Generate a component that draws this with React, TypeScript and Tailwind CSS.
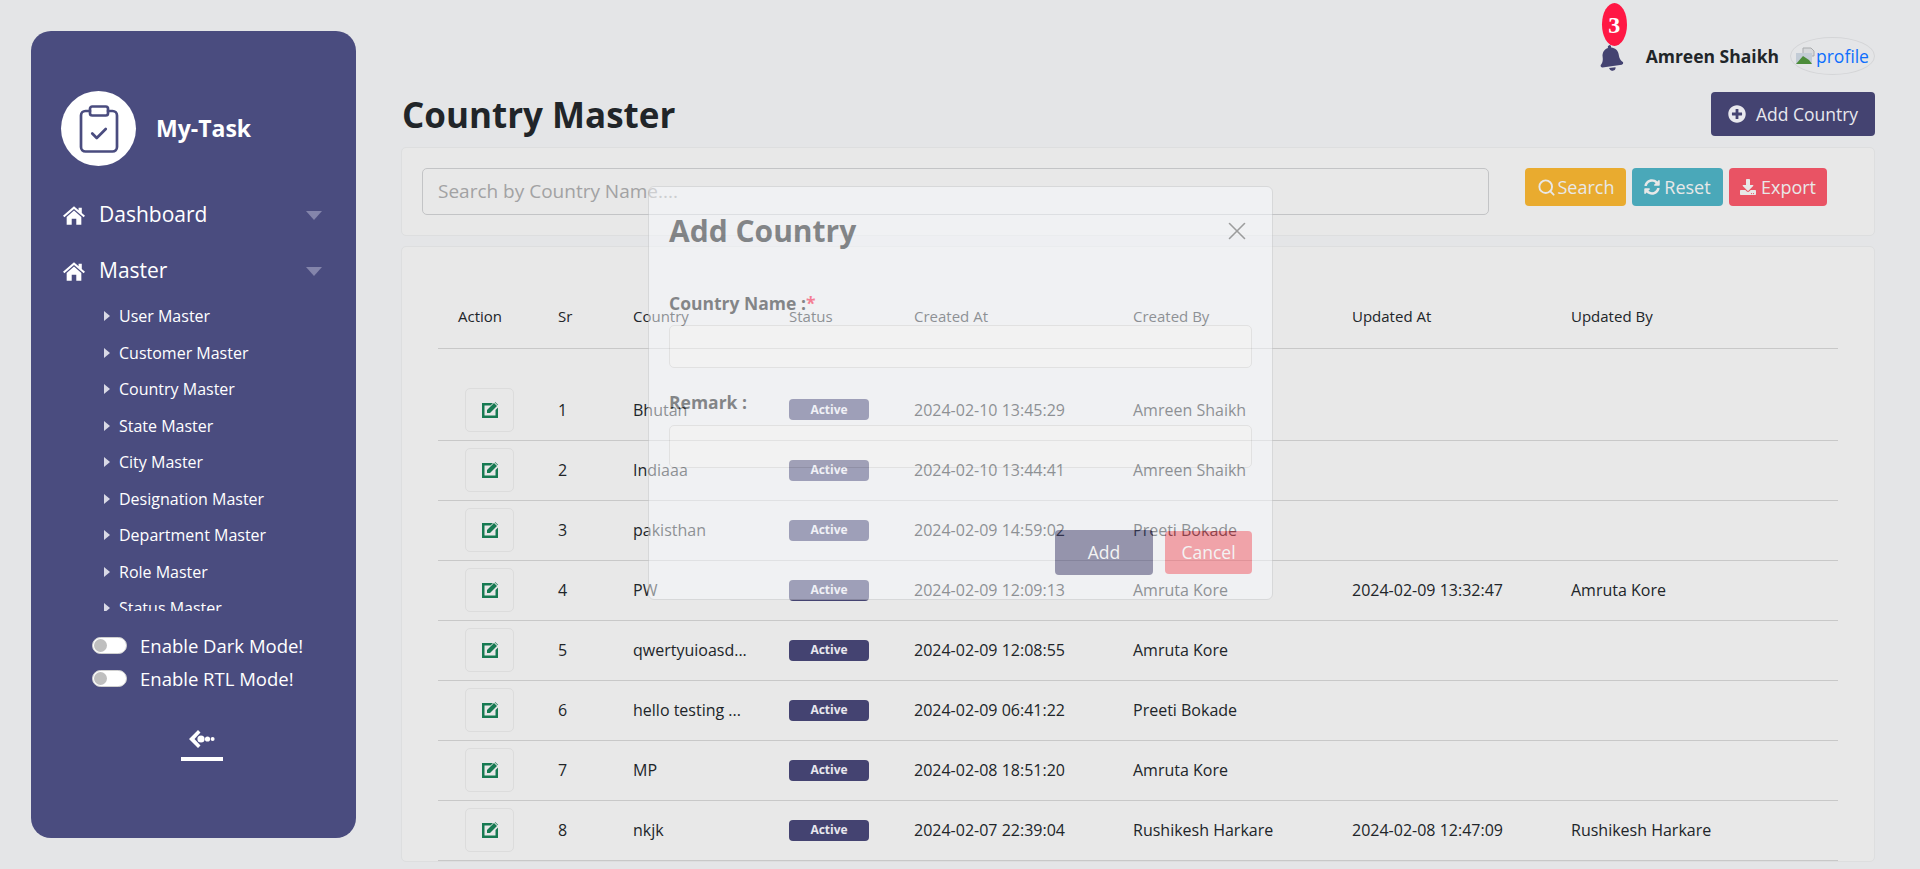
import React from "react";
import { FaBell, FaPlusCircle, FaSyncAlt, FaDownload } from "react-icons/fa";
import { FiSearch, FiX } from "react-icons/fi";
import { LuClipboardCheck } from "react-icons/lu";

const subItems = [
  "User Master",
  "Customer Master",
  "Country Master",
  "State Master",
  "City Master",
  "Designation Master",
  "Department Master",
  "Role Master",
  "Status Master",
];

const rows = [
  { sr: 1, country: "Bhutan", createdAt: "2024-02-10 13:45:29", createdBy: "Amreen Shaikh", updatedAt: "", updatedBy: "" },
  { sr: 2, country: "Indiaaa", createdAt: "2024-02-10 13:44:41", createdBy: "Amreen Shaikh", updatedAt: "", updatedBy: "" },
  { sr: 3, country: "pakisthan", createdAt: "2024-02-09 14:59:02", createdBy: "Preeti Bokade", updatedAt: "", updatedBy: "" },
  { sr: 4, country: "PW", createdAt: "2024-02-09 12:09:13", createdBy: "Amruta Kore", updatedAt: "2024-02-09 13:32:47", updatedBy: "Amruta Kore" },
  { sr: 5, country: "qwertyuioasd...", createdAt: "2024-02-09 12:08:55", createdBy: "Amruta Kore", updatedAt: "", updatedBy: "" },
  { sr: 6, country: "hello testing ...", createdAt: "2024-02-09 06:41:22", createdBy: "Preeti Bokade", updatedAt: "", updatedBy: "" },
  { sr: 7, country: "MP", createdAt: "2024-02-08 18:51:20", createdBy: "Amruta Kore", updatedAt: "", updatedBy: "" },
  { sr: 8, country: "nkjk", createdAt: "2024-02-07 22:39:04", createdBy: "Rushikesh Harkare", updatedAt: "2024-02-08 12:47:09", updatedBy: "Rushikesh Harkare" },
];

const headers = ["Action", "Sr", "Country", "Status", "Created At", "Created By", "Updated At", "Updated By"];

const HomeIcon = () => (
  <svg width="22" height="19" viewBox="0 0 24 20" fill="#fff">
    <path d="M12 0 17 4.2V1.5h3.5V7.2L24 10.2l-1.5 1.7L12 3 1.5 11.9 0 10.2z" />
    <path d="M4 11.5 12 4.6 20 11.5V20H14.5V13.5H9.5V20H4z" />
  </svg>
);

const EditIcon = () => (
  <svg width="16" height="16" viewBox="0 0 16 16" fill="#177a52">
    <path d="M0 1h11L8.5 3.5H2.5v10h11V8L16 5.5V16H0z" />
    <path d="M5 8 12 1 15 4 8 11H5z" />
    <path d="M12.8.4 13.2 0 16 2.8 15.6 3.3z" />
  </svg>
);

const CollapseIcon = () => (
  <svg width="26" height="18" viewBox="0 0 26 18" fill="#fff">
    <path d="M9 0 11.5 2.5 5.5 9 11.5 15.5 9 18 0 9z" />
    <circle cx="12" cy="9" r="3.6" />
    <circle cx="18.5" cy="9" r="2.6" />
    <circle cx="23.6" cy="9" r="2" />
  </svg>
);

const Toggle = ({ label }: { label: string }) => (
  <div className="flex h-[33px] items-center pl-[61px]">
    <div className="flex h-[17px] w-[35px] items-center rounded-full border border-[#cfcfcf] bg-white pl-[1px]">
      <div className="h-[13px] w-[13px] rounded-full bg-[#bfbfbf]" />
    </div>
    <span className="ml-[13px] text-[18.5px] text-white">{label}</span>
  </div>
);

const MainNavItem = ({ label }: { label: string }) => (
  <div className="flex h-[56px] items-center pl-[32px] pr-[34px] text-white">
    <HomeIcon />
    <span className="ml-[14px] flex-1 text-[21px]">{label}</span>
    <svg width="16" height="9" viewBox="0 0 16 9">
      <path d="M0 0h16L8 9z" fill="#8485ab" />
    </svg>
  </div>
);

const App: React.FC = () => {
  return (
    <div className="relative flex h-[869px] overflow-hidden bg-[#e4e5e7] font-['Open_Sans',sans-serif] text-[#212529]">
      {/* Sidebar */}
      <aside className="mt-[31px] ml-[31px] h-[807px] w-[325px] shrink-0 rounded-[20px] bg-[#4a4c7f] pt-[60px]">
        <div className="flex items-center pl-[30px]">
          <div className="flex h-[75px] w-[75px] items-center justify-center rounded-full bg-white">
            <LuClipboardCheck size={54} color="#4a4c7f" strokeWidth={1.2} />
          </div>
          <span className="ml-[20px] text-[23px] font-bold text-white">My-Task</span>
        </div>

        <nav className="mt-[21px] h-[424px] overflow-hidden">
          <MainNavItem label="Dashboard" />
          <MainNavItem label="Master" />
          <ul className="-mt-[1px]">
            {subItems.map((item) => (
              <li key={item} className="flex h-[36.5px] items-center pl-[73px] text-[16px] text-white">
                <svg width="6" height="10" viewBox="0 0 6 10" className="mr-[9px]">
                  <path d="M0 0l6 5-6 5z" fill="#d9d9e6" />
                </svg>
                <span>{item}</span>
              </li>
            ))}
          </ul>
        </nav>

        <div className="mt-[18px]">
          <Toggle label="Enable Dark Mode!" />
          <Toggle label="Enable RTL Mode!" />
        </div>

        <div className="mt-[35px] flex flex-col items-center pl-[17px]">
          <CollapseIcon />
          <div className="mt-[9px] h-[4px] w-[42px] bg-white" />
        </div>
      </aside>

      {/* Main */}
      <main className="ml-[45px] mr-[45px] min-w-0 flex-1">
        <div className="flex h-[92px] items-start justify-end pt-[37px]">
          <div className="relative mt-[8px] mr-[22px]">
            <FaBell className="-rotate-[8deg] text-[26px] text-[#444371]" />
            <span className="absolute -top-[42px] left-[4px] flex h-[43px] w-[25px] items-center justify-center rounded-[50%] bg-[#ff1744] font-['Liberation_Serif',serif] text-[24px] font-bold text-white">
              3
            </span>
          </div>
          <span className="mt-[6px] text-[17.5px] font-bold">Amreen Shaikh</span>
          <div className="ml-[11px] flex h-[38px] w-[85px] items-center overflow-hidden rounded-[50%] border border-[#d4d5d7] pl-[5px]">
            <svg width="20" height="18" viewBox="0 0 20 18" className="shrink-0">
              <path d="M7 1h8l3 3v5H7z" fill="#d7d9dc" stroke="#a9abad" strokeWidth="1" />
              <path d="M0 6h16v11H0z" fill="#c3ccd6" />
              <path d="M0 17l7-8 6 4 3 4z" fill="#4c8c3a" />
            </svg>
            <span className="text-[17.5px] text-[#0d6efd]">profile</span>
          </div>
        </div>

        <div className="flex h-[55px] items-start justify-between pl-[1px]">
          <h1 className="text-[35px] leading-[46px] font-bold">Country Master</h1>
          <button className="flex h-[44px] w-[164px] items-center justify-center rounded-[4px] bg-[#444371] text-[17.5px] text-[#e8e8ee]">
            <FaPlusCircle className="mr-[10px] text-[18px]" />
            Add Country
          </button>
        </div>

        {/* Search card */}
        <section className="flex h-[89px] items-start rounded-[5px] border border-[#dddedf] bg-[#e8e8e8] pt-[20px] pl-[20px]">
          <div className="flex h-[47px] w-[1067px] items-center rounded-[5px] border border-[#c3c4c6] bg-[#e8e8e8] px-[15px] text-[19px] text-[#a2a2a3]">
            Search by Country Name....
          </div>
          <div className="ml-[36px] flex gap-[6px] text-[18px] text-[#e8e8e8]">
            <button className="flex h-[38px] w-[101px] items-center justify-center rounded-[4px] bg-[#e9ab2f]">
              <FiSearch className="mr-[2px] text-[19px]" strokeWidth={2.4} />
              Search
            </button>
            <button className="flex h-[38px] w-[91px] items-center justify-center rounded-[4px] bg-[#4aa8b9]">
              <FaSyncAlt className="mr-[4px] text-[16px]" />
              Reset
            </button>
            <button className="flex h-[38px] w-[98px] items-center justify-center rounded-[4px] bg-[#e95364]">
              <FaDownload className="mr-[5px] text-[16px]" />
              Export
            </button>
          </div>
        </section>

        {/* Table card */}
        <section className="mt-[10px] rounded-[5px] border border-[#dddedf] bg-[#e8e8e8] px-[36px] pt-[35px]">
          <table className="w-[1400px] table-fixed border-collapse text-left text-[16px]">
            <colgroup>
              <col className="w-[100px]" />
              <col className="w-[75px]" />
              <col className="w-[156px]" />
              <col className="w-[125px]" />
              <col className="w-[219px]" />
              <col className="w-[219px]" />
              <col className="w-[219px]" />
              <col className="w-[287px]" />
            </colgroup>
            <thead>
              <tr className="h-[66px] border-b border-[#c8c8c8]">
                {headers.map((h) => (
                  <th key={h} className="pt-[2px] pl-[20px] align-middle text-[15px] font-normal">
                    {h}
                  </th>
                ))}
              </tr>
            </thead>
            <tbody>
              <tr className="h-[32px]" />
              {rows.map((r) => (
                <tr key={r.sr} className="h-[60px] border-b border-[#c8c8c8]">
                  <td className="pl-[27px]">
                    <div className="flex h-[44px] w-[49px] items-center justify-center rounded-[5px] border border-[#dcdcdc]">
                      <EditIcon />
                    </div>
                  </td>
                  <td className="pl-[20px]">{r.sr}</td>
                  <td className="pl-[20px]">{r.country}</td>
                  <td className="pl-[20px]">
                    <span className="flex h-[21px] w-[80px] items-center justify-center rounded-[4px] bg-[#444371] text-[12px] font-bold text-[#e8e8ee]">
                      Active
                    </span>
                  </td>
                  <td className="pl-[20px]">{r.createdAt}</td>
                  <td className="pl-[20px]">{r.createdBy}</td>
                  <td className="pl-[20px]">{r.updatedAt}</td>
                  <td className="pl-[20px]">{r.updatedBy}</td>
                </tr>
              ))}
            </tbody>
          </table>
        </section>
      </main>

      {/* Modal fading in over the page */}
      <div className="absolute left-[648px] top-[186px] h-[414px] w-[625px] rounded-[6px] border border-[#c8c9cb] bg-[#f8fafe] px-[20px] opacity-50">
        <div className="flex items-center justify-between pt-[25px]">
          <h2 className="text-[30px] leading-[38px] font-bold">Add Country</h2>
          <FiX className="text-[30px] text-[#555]" strokeWidth={1.3} />
        </div>
        <label className="mt-[41px] block text-[17.5px] leading-[24px] font-bold">
          Country Name :<span className="text-[#ff1744]">*</span>
        </label>
        <div className="mt-[10px] h-[43px] rounded-[5px] border border-[#dcdcdc] bg-[#fcfcfc]" />
        <label className="mt-[22px] block text-[17.5px] leading-[24px] font-bold">Remark :</label>
        <div className="mt-[11px] h-[43px] rounded-[5px] border border-[#dcdcdc] bg-[#fcfcfc]" />
        <div className="mt-[62px] flex items-center justify-end gap-[12px] text-[17.5px] text-white">
          <button className="h-[45px] w-[98px] rounded-[4px] bg-[#444371]">Add</button>
          <button className="h-[43px] w-[87px] rounded-[4px] bg-[#f8606c]">Cancel</button>
        </div>
      </div>
    </div>
  );
};

export default App;
